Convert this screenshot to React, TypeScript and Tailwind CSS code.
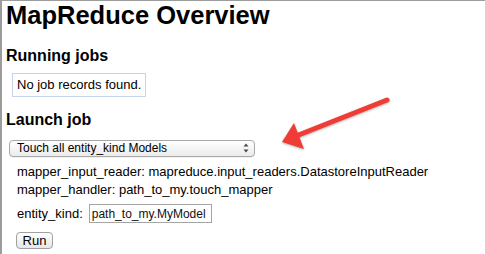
export default function App() {
  return (
    <div className="h-[254px] w-[485px] bg-white font-['Liberation_Sans',Arial,sans-serif] text-black">
      <div className="relative h-full border-l-2 border-t border-[#9c9c9c] pl-[4px]">
        <h1 className="mt-[1px] text-[25.5px] font-bold leading-[26px]">MapReduce Overview</h1>

        {/* Running jobs */}
        <h2 className="mt-[20px] text-[16px] font-bold leading-[16px]">Running jobs</h2>
        <div className="ml-[6px] mt-[9px] w-fit border border-[#c4d4ea] px-[4px] py-[3px] text-[13px] leading-[16px]">
          No job records found.
        </div>

        {/* Launch job */}
        <h2 className="mt-[15px] text-[16px] font-bold leading-[16px]">Launch job</h2>
        <div className="relative ml-[3px] mt-[12px] w-[246px]">
          <select
            className="block h-[17px] w-full appearance-none rounded-[4px] border border-[#a8a8a8] bg-gradient-to-b from-white to-[#ebebeb] pl-[7px] text-[12px] leading-[15px] text-black shadow-[0_1px_0_rgba(0,0,0,0.06)] outline-none"
            defaultValue="touch"
          >
            <option value="touch">Touch all entity_kind Models</option>
          </select>
          <svg className="pointer-events-none absolute right-[6px] top-[3px]" width="6" height="10" viewBox="0 0 6 10">
            <path d="M3 0.5 L5.5 3.5 L0.5 3.5 Z" fill="#4a4a4a" />
            <path d="M3 9.5 L5.5 6.5 L0.5 6.5 Z" fill="#4a4a4a" />
          </svg>
        </div>

        <div className="ml-[11px] mt-[6px] text-[13px] leading-[18px]">
          <div>mapper_input_reader: mapreduce.input_readers.DatastoreInputReader</div>
          <div>mapper_handler: path_to_my.touch_mapper</div>
          <div className="mt-[5px] flex items-center gap-[6px]">
            <span>entity_kind:</span>
            <input
              className="block h-[19px] w-[123px] border border-[#a5a5a5] px-[2px] text-[12px] leading-[17px] text-[#111] outline-none"
              defaultValue="path_to_my.MyModel"
            />
          </div>
        </div>

        <button className="ml-[10px] mt-[9px] block h-[17px] w-[37px] rounded-[4px] border border-[#a0a0a0] bg-gradient-to-b from-white to-[#e6e6e6] text-[13px] leading-[15px]">
          Run
        </button>

        {/* Red annotation arrow */}
        <svg
          className="pointer-events-none absolute left-[274px] top-[93px] drop-shadow-[0_1px_1px_rgba(0,0,0,0.3)]"
          width="116"
          height="60"
          viewBox="276 94 116 60"
        >
          <line x1="387" y1="100" x2="296" y2="136" stroke="#f03c36" strokeWidth="5" strokeLinecap="round" />
          <polygon points="282,142 294,123 304,149" fill="#f03c36" />
        </svg>
      </div>
    </div>
  );
}
